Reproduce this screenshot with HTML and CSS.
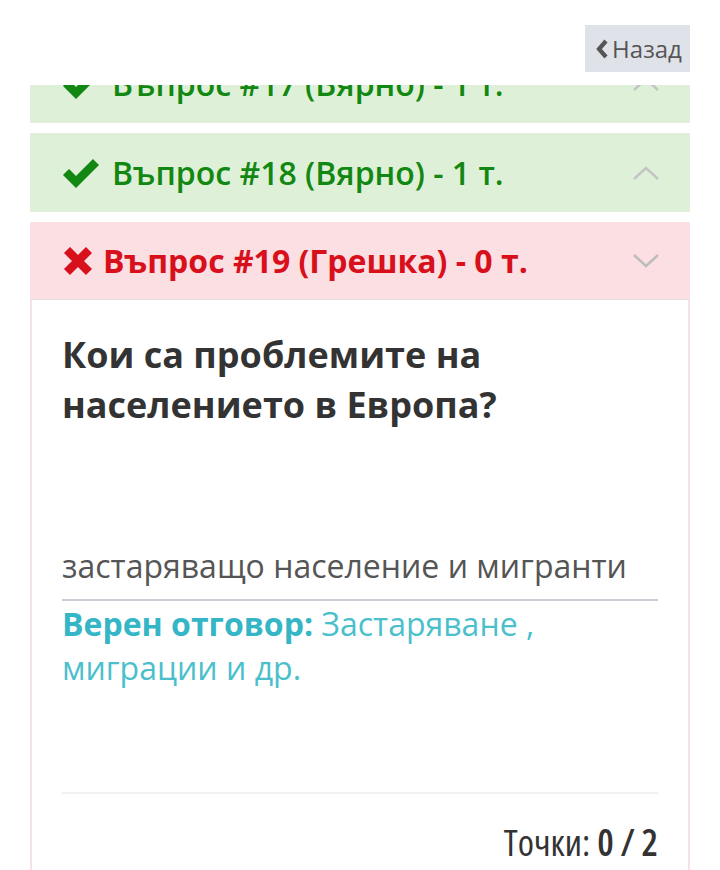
FILE: index.html
```html
<!DOCTYPE html>
<html lang="bg">
<head>
<meta charset="utf-8">
<link rel="stylesheet" href="styles.css">
</head>
<body>
<div class="topbar">
  <button class="back"><svg class="back-ico" viewBox="0 0 14 22" width="14" height="22"><polyline points="11,3 4,11 11,19" fill="none" stroke="#555" stroke-width="4.2"/></svg>Назад</button>
</div>
<main class="list">
  <section class="panel ok">
    <div class="head">
      <svg class="ico" viewBox="0 0 38 30" width="38" height="30"><polyline points="4,14 14,24 34,4" fill="none" stroke="currentColor" stroke-width="8.5" stroke-linejoin="miter"/></svg>
      <span class="title">Въпрос #17 (Вярно) - 1 т.</span>
      <svg class="chev" viewBox="0 0 28 16" width="28" height="16"><polyline points="2,14 14,3 26,14" fill="none" stroke="#c4c4c4" stroke-width="2.4"/></svg>
    </div>
  </section>
  <section class="panel ok">
    <div class="head">
      <svg class="ico" viewBox="0 0 38 30" width="38" height="30"><polyline points="4,14 14,24 34,4" fill="none" stroke="currentColor" stroke-width="8.5" stroke-linejoin="miter"/></svg>
      <span class="title">Въпрос #18 (Вярно) - 1 т.</span>
      <svg class="chev" viewBox="0 0 28 16" width="28" height="16"><polyline points="2,14 14,3 26,14" fill="none" stroke="#c4c4c4" stroke-width="2.4"/></svg>
    </div>
  </section>
  <section class="panel bad">
    <div class="head">
      <svg class="ico xico" viewBox="0 0 32 32" width="32" height="32"><path d="M5 5 L27 27 M27 5 L5 27" fill="none" stroke="currentColor" stroke-width="8.5"/></svg>
      <span class="title">Въпрос #19 (Грешка) - 0 т.</span>
      <svg class="chev" viewBox="0 0 28 16" width="28" height="16"><polyline points="2,2 14,13 26,2" fill="none" stroke="#bdbdbd" stroke-width="2.4"/></svg>
    </div>
    <div class="body">
      <h2 class="question">Кои са проблемите на населението в Европа?</h2>
      <div class="answer">застаряващо население и мигранти</div>
      <p class="correct"><b>Верен отговор:</b> Застаряване , миграции и др.</p>
      <hr class="sep">
      <p class="points">Точки: <b>0 / 2</b></p>
    </div>
  </section>
</main>
</body>
</html>
```
FILE: styles.css
```css
html, body {
  margin: 0;
  padding: 0;
  background: #fff;
  font-family: "Open Sans", "Noto Sans", sans-serif;
}
.topbar {
  position: fixed;
  top: 0;
  left: 0;
  right: 0;
  height: 85px;
  background: #fff;
  z-index: 5;
}
.back {
  position: absolute;
  top: 25px;
  right: 30px;
  width: 105px;
  height: 47px;
  border: 0;
  background: #dfe3e9;
  color: #555;
  font-family: "Open Sans", sans-serif;
  font-size: 24px;
  display: flex;
  align-items: center;
  justify-content: center;
  gap: 3px;
  padding: 0 0 0 2px;
}
.back-ico { margin-top: 1px; }
.list {
  padding: 44px 30px 0;
  display: flex;
  flex-direction: column;
  gap: 10px;
}
.panel { width: 660px; }
.head {
  display: flex;
  align-items: center;
  height: 79px;
  padding: 0 30px 0 32px;
  box-sizing: border-box;
}
.ok .head { background: #dff0d8; color: #128712; }
.bad .head {
  background: #fbdfe2;
  color: #d8101c;
  height: 78px;
  border-bottom: 1px solid #e4dcdd;
}
.ico { flex: none; margin-right: 12px; }
.xico { margin-left: 0; margin-right: 9px; }
.title {
  font-size: 32px;
  font-weight: 600;
  flex: 1;
  white-space: nowrap;
}
.bad .title { font-weight: 700; }
.chev { flex: none; }
.body {
  border: 2px solid #f6e2e4;
  border-top: 0;
  padding: 30px 30px 20px;
  min-height: 600px;
}
.question {
  margin: 0;
  font-size: 36px;
  line-height: 50px;
  font-weight: 700;
  color: #333;
}
.answer {
  margin-top: 113px;
  font-size: 32px;
  line-height: 45px;
  color: #555;
  padding-bottom: 11px;
  border-bottom: 2px solid #c9cfd4;
}
.correct {
  margin: 1px 0 0;
  font-size: 32px;
  line-height: 44px;
  color: #4bbfcc;
}
.correct b { color: #35b6c6; font-weight: 700; }
.sep {
  margin: 102px 0 0;
  border: 0;
  border-top: 2px solid #f0f0f0;
}
.points {
  margin: 28px 0 0;
  text-align: right;
  font-size: 37px;
  line-height: 40px;
  color: #333;
  font-stretch: condensed;
}
.points b { font-weight: 600; }
```
